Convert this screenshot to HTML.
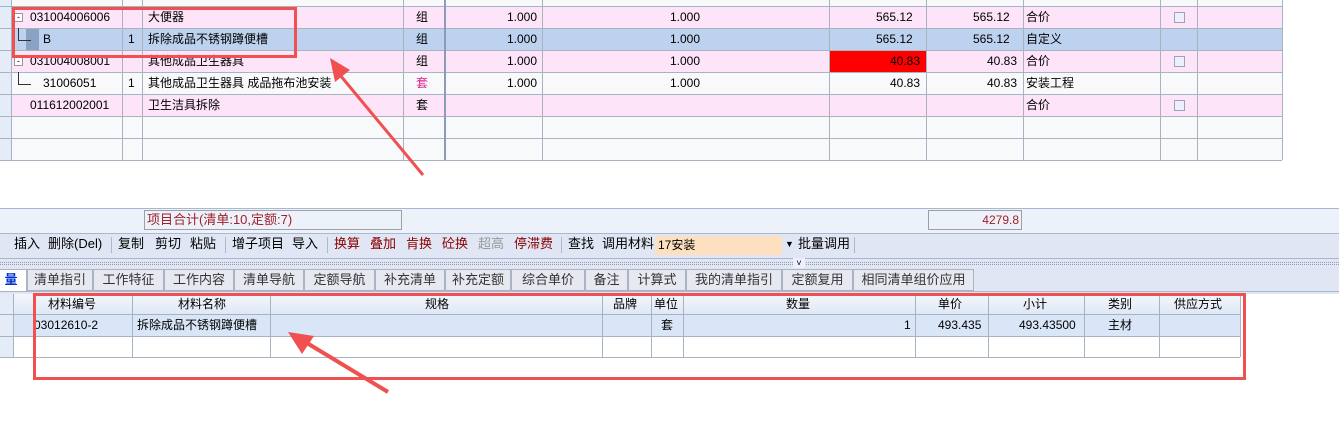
<!DOCTYPE html><html><head><meta charset="utf-8"><style>
*{margin:0;padding:0;box-sizing:border-box}
body{width:1339px;height:437px;background:#fff;position:relative;overflow:hidden;font-family:"Liberation Sans","Noto Sans CJK SC",sans-serif;font-size:12px;color:#000}
.a{position:absolute;white-space:nowrap;line-height:22px}
.r{position:absolute;left:0;height:22px}
.vl{position:absolute;width:1px;background:#a9b3bf}
.hl{position:absolute;height:1px;background:#a9b3bf}
.t{position:absolute;top:269px;height:22px;border:1px solid #aab4c4;background:#e6e9f0;line-height:20px;text-align:center;font-size:13px;color:#333}
.tb{position:absolute;top:233px;line-height:22px;font-size:13px}
.sep{position:absolute;top:237px;width:1px;height:16px;background:#b0b8c8}
.cb{position:absolute;left:1174px;width:11px;height:11px;border:1px solid #9aa4b4;background:#eef}
</style></head><body>
<!-- top grid rows -->
<div class="r" style="top:0;width:1282px;height:6px;background:#f8f9fb"></div>
<div class="r" style="top:6px;width:1282px;background:#fde4f8"></div>
<div class="r" style="top:28px;width:1282px;background:#bcd2ee"></div>
<div class="r" style="top:50px;width:1282px;background:#fde4f8"></div>
<div class="r" style="top:72px;width:1282px;background:#f8f9fb"></div>
<div class="r" style="top:94px;width:1282px;background:#fde4f8"></div>
<div class="r" style="top:116px;width:1282px;height:44px;background:#f8f9fb"></div>
<div class="r" style="top:0;width:11px;height:160px;background:#e4ecf7"></div>
<div class="r" style="top:28px;left:11px;width:15px;background:#bcd2ee"></div>
<div class="r" style="top:29px;left:26px;width:13px;height:21px;background:#8aa2c4"></div>
<div class="r" style="top:73px;left:11px;width:15px;height:21px;background:#f8f9fb"></div>
<div class="r" style="top:829px;"></div>
<div style="position:absolute;left:829px;top:50px;width:97px;height:22px;background:#f00"></div>
<!-- grid lines -->
<div class="hl" style="top:6px;left:0;width:1282px"></div>
<div class="hl" style="top:28px;left:0;width:1282px"></div>
<div class="hl" style="top:50px;left:0;width:1282px"></div>
<div class="hl" style="top:72px;left:0;width:1282px"></div>
<div class="hl" style="top:94px;left:0;width:1282px"></div>
<div class="hl" style="top:116px;left:0;width:1282px"></div>
<div class="hl" style="top:138px;left:0;width:1282px"></div>
<div class="hl" style="top:160px;left:0;width:1282px"></div>
<div class="vl" style="left:11px;top:0;height:160px"></div>
<div class="vl" style="left:122px;top:0;height:160px"></div>
<div class="vl" style="left:142px;top:0;height:160px"></div>
<div class="vl" style="left:403px;top:0;height:160px"></div>
<div class="vl" style="left:444px;top:0;height:160px;width:2px;background:#8a9cb8"></div>
<div class="vl" style="left:542px;top:0;height:160px"></div>
<div class="vl" style="left:829px;top:0;height:160px"></div>
<div class="vl" style="left:926px;top:0;height:160px"></div>
<div class="vl" style="left:1023px;top:0;height:160px"></div>
<div class="vl" style="left:1160px;top:0;height:160px"></div>
<div class="vl" style="left:1197px;top:0;height:160px"></div>
<div class="vl" style="left:1282px;top:0;height:160px"></div>
<!-- tree boxes -->
<div style="position:absolute;left:14px;top:13px;width:9px;height:9px;border:1px solid #999;background:#fff;font-size:9px;line-height:6px;text-align:center">-</div>
<div style="position:absolute;left:14px;top:57px;width:9px;height:9px;border:1px solid #999;background:#fff;font-size:9px;line-height:6px;text-align:center">-</div>
<div style="position:absolute;left:18px;top:28px;width:1px;height:12px;background:#333"></div>
<div style="position:absolute;left:18px;top:40px;width:13px;height:1px;background:#333"></div>
<div style="position:absolute;left:18px;top:72px;width:1px;height:12px;background:#333"></div>
<div style="position:absolute;left:18px;top:84px;width:13px;height:1px;background:#333"></div>
<!-- text -->
<div class="a" style="left:30px;top:6px">031004006006</div><div class="a" style="left:148px;top:6px">大便器</div><div class="a" style="left:416px;top:6px">组</div>
<div class="a" style="left:43px;top:28px">B</div><div class="a" style="left:128px;top:28px">1</div><div class="a" style="left:148px;top:28px">拆除成品不锈钢蹲便槽</div><div class="a" style="left:416px;top:28px">组</div>
<div class="a" style="left:30px;top:50px">031004008001</div><div class="a" style="left:148px;top:50px">其他成品卫生器具</div><div class="a" style="left:416px;top:50px">组</div>
<div class="a" style="left:43px;top:72px">31006051</div><div class="a" style="left:128px;top:72px">1</div><div class="a" style="left:148px;top:72px">其他成品卫生器具 成品拖布池安装</div><div class="a" style="left:416px;top:72px;color:#e0208a">套</div>
<div class="a" style="left:30px;top:94px">011612002001</div><div class="a" style="left:148px;top:94px">卫生洁具拆除</div><div class="a" style="left:416px;top:94px">套</div>
<div class="a" style="left:507px;top:6px">1.000</div><div class="a" style="left:670px;top:6px">1.000</div><div class="a" style="left:876px;top:6px">565.12</div><div class="a" style="left:973px;top:6px">565.12</div><div class="a" style="left:1026px;top:6px">合价</div>
<div class="a" style="left:507px;top:28px">1.000</div><div class="a" style="left:670px;top:28px">1.000</div><div class="a" style="left:876px;top:28px">565.12</div><div class="a" style="left:973px;top:28px">565.12</div><div class="a" style="left:1026px;top:28px">自定义</div>
<div class="a" style="left:507px;top:50px">1.000</div><div class="a" style="left:670px;top:50px">1.000</div><div class="a" style="left:890px;top:50px">40.83</div><div class="a" style="left:987px;top:50px">40.83</div><div class="a" style="left:1026px;top:50px">合价</div>
<div class="a" style="left:507px;top:72px">1.000</div><div class="a" style="left:670px;top:72px">1.000</div><div class="a" style="left:890px;top:72px">40.83</div><div class="a" style="left:987px;top:72px">40.83</div><div class="a" style="left:1026px;top:72px">安装工程</div>
<div class="a" style="left:1026px;top:94px">合价</div>
<div class="cb" style="top:12px"></div><div class="cb" style="top:56px"></div><div class="cb" style="top:100px"></div>
<!-- summary bar -->
<div style="position:absolute;left:0;top:208px;width:1339px;height:25px;background:#edf2fa;border-top:1px solid #a8b8d0"></div>
<div style="position:absolute;left:144px;top:210px;width:258px;height:20px;border:1px solid #a0a0a0;color:#a0202a;line-height:18px;padding-left:2px;font-size:13px">项目合计(清单:10,定额:7)</div>
<div style="position:absolute;left:928px;top:210px;width:94px;height:20px;border:1px solid #a0a0a0;color:#a0202a;line-height:18px;text-align:right;padding-right:2px">4279.8</div>
<!-- toolbar -->
<div style="position:absolute;left:0;top:233px;width:1339px;height:25px;background:#e0e6f4;border-top:1px solid #a8b8d0"></div>
<div class="tb" style="left:14px">插入</div><div class="tb" style="left:48px">删除(Del)</div><div class="sep" style="left:111px"></div>
<div class="tb" style="left:118px">复制</div><div class="tb" style="left:155px">剪切</div><div class="tb" style="left:190px">粘贴</div><div class="sep" style="left:225px"></div>
<div class="tb" style="left:232px">增子项目</div><div class="tb" style="left:292px">导入</div><div class="sep" style="left:327px"></div>
<div class="tb" style="left:334px;color:#8a0000">换算</div><div class="tb" style="left:370px;color:#8a0000">叠加</div><div class="tb" style="left:406px;color:#8a0000">肯换</div><div class="tb" style="left:442px;color:#8a0000">砼换</div><div class="tb" style="left:478px;color:#999">超高</div><div class="tb" style="left:514px;color:#8a0000">停滞费</div><div class="sep" style="left:561px"></div>
<div class="tb" style="left:568px">查找</div><div class="tb" style="left:602px">调用材料</div>
<div style="position:absolute;left:655px;top:236px;width:127px;height:19px;background:#fde0c0;line-height:19px;padding-left:3px;font-size:12px">17安装</div>
<div class="tb" style="left:785px;font-size:9px">▼</div><div class="tb" style="left:798px">批量调用</div><div class="sep" style="left:854px"></div>
<!-- splitter -->
<div style="position:absolute;left:0;top:258px;width:1339px;height:11px;background:#e0e6f4;border-top:1px solid #a8b8d0"></div>
<div style="position:absolute;left:0;top:262px;width:1339px;height:3px;border-top:1px dotted #99a;border-bottom:1px dotted #99a"></div>
<div style="position:absolute;left:793px;top:258px;width:12px;height:10px;background:#eef;font-size:9px;line-height:10px;text-align:center">˅</div>
<!-- tabs -->
<div style="position:absolute;left:0;top:269px;width:1339px;height:25px;background:#e0e6f4"></div>
<div style="position:absolute;left:0;top:291px;width:1339px;height:1px;background:#a8b8d0"></div>
<div class="t" style="left:-5px;width:32px;background:#fff;color:#0033cc;font-weight:bold;height:23px">量</div>
<div class="t" style="left:27px;width:66px">清单指引</div><div class="t" style="left:93px;width:71px">工作特征</div><div class="t" style="left:164px;width:70px">工作内容</div><div class="t" style="left:234px;width:70px">清单导航</div><div class="t" style="left:304px;width:71px">定额导航</div><div class="t" style="left:375px;width:70px">补充清单</div><div class="t" style="left:445px;width:66px">补充定额</div><div class="t" style="left:511px;width:74px">综合单价</div><div class="t" style="left:585px;width:43px">备注</div><div class="t" style="left:628px;width:58px">计算式</div><div class="t" style="left:686px;width:96px">我的清单指引</div><div class="t" style="left:782px;width:71px">定额复用</div><div class="t" style="left:853px;width:121px">相同清单组价应用</div>
<!-- bottom grid -->
<div style="position:absolute;left:0;top:294px;width:1240px;height:20px;background:linear-gradient(#f4f7fc,#dfe8f6)"></div>
<div style="position:absolute;left:0;top:314px;width:1240px;height:22px;background:#d8e6f8"></div>
<div style="position:absolute;left:0;top:294px;width:13px;height:64px;background:#e4ecf7"></div>
<div class="hl" style="top:314px;left:0;width:1240px"></div><div class="hl" style="top:336px;left:0;width:1240px"></div><div class="hl" style="top:357px;left:0;width:1240px"></div>
<div class="vl" style="left:13px;top:294px;height:63px"></div><div class="vl" style="left:132px;top:294px;height:63px"></div><div class="vl" style="left:270px;top:294px;height:63px"></div><div class="vl" style="left:602px;top:294px;height:63px"></div><div class="vl" style="left:651px;top:294px;height:63px"></div><div class="vl" style="left:683px;top:294px;height:63px"></div><div class="vl" style="left:915px;top:294px;height:63px"></div><div class="vl" style="left:988px;top:294px;height:63px"></div><div class="vl" style="left:1084px;top:294px;height:63px"></div><div class="vl" style="left:1159px;top:294px;height:63px"></div><div class="vl" style="left:1240px;top:294px;height:63px"></div>
<div class="a" style="left:48px;top:294px;line-height:20px">材料编号</div><div class="a" style="left:178px;top:294px;line-height:20px">材料名称</div><div class="a" style="left:425px;top:294px;line-height:20px">规格</div><div class="a" style="left:613px;top:294px;line-height:20px">品牌</div><div class="a" style="left:654px;top:294px;line-height:20px">单位</div><div class="a" style="left:786px;top:294px;line-height:20px">数量</div><div class="a" style="left:938px;top:294px;line-height:20px">单价</div><div class="a" style="left:1023px;top:294px;line-height:20px">小计</div><div class="a" style="left:1108px;top:294px;line-height:20px">类别</div><div class="a" style="left:1174px;top:294px;line-height:20px">供应方式</div>
<div class="a" style="left:34px;top:314px">03012610-2</div><div class="a" style="left:137px;top:314px">拆除成品不锈钢蹲便槽</div><div class="a" style="left:661px;top:314px">套</div><div class="a" style="left:904px;top:314px">1</div><div class="a" style="left:938px;top:314px">493.435</div><div class="a" style="left:1019px;top:314px">493.43500</div><div class="a" style="left:1108px;top:314px">主材</div>
<!-- red annotations -->
<div style="position:absolute;left:12px;top:7px;width:285px;height:51px;border:3px solid #f05050"></div>
<div style="position:absolute;left:33px;top:293px;width:1213px;height:87px;border:3px solid #f05050"></div>
<svg style="position:absolute;left:0;top:0" width="1339" height="437">
<line x1="423" y1="175" x2="340" y2="75" stroke="#f05050" stroke-width="3"/>
<polygon points="330,58 350,70 335,82" fill="#f05050"/>
<line x1="388" y1="392" x2="302" y2="340" stroke="#f05050" stroke-width="4"/>
<polygon points="288,332 314,336 302,354" fill="#f05050"/>
</svg>
</body></html>
